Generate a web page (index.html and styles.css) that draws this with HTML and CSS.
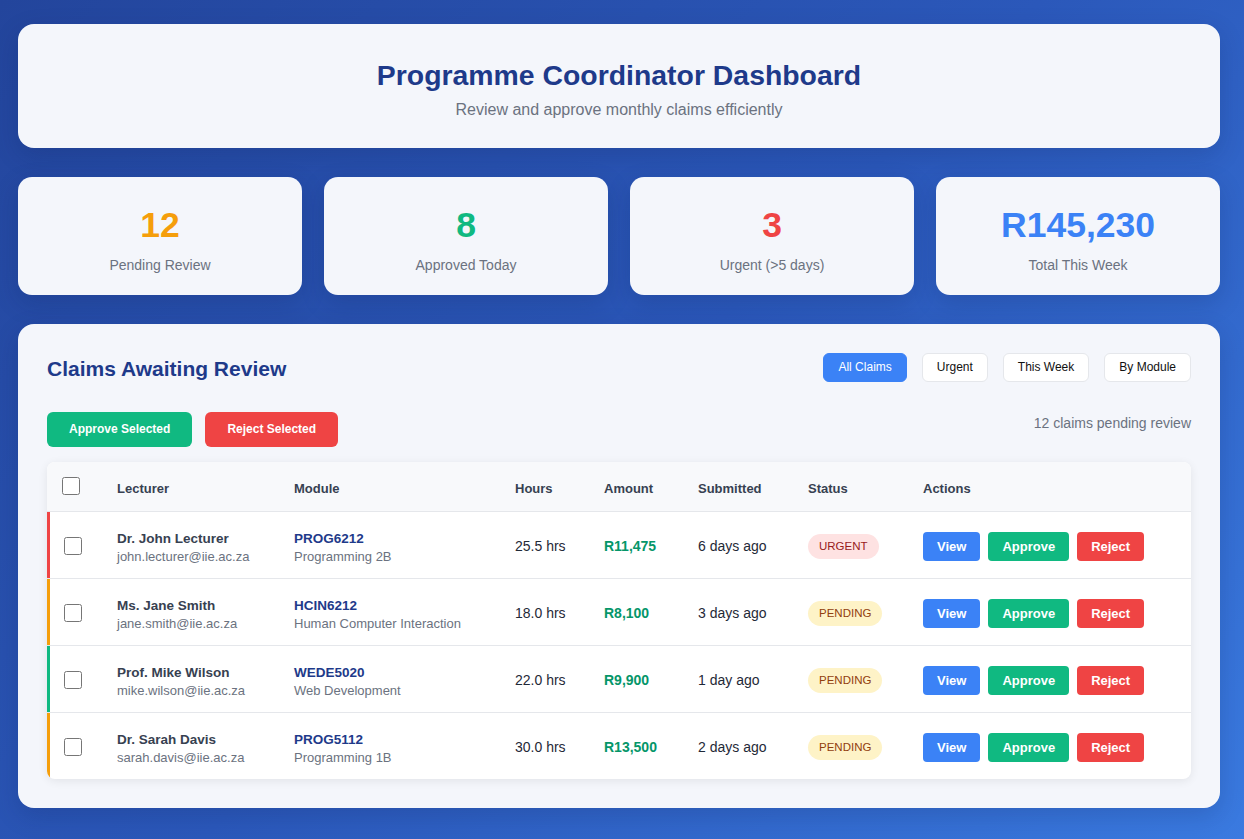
FILE: index.html
```html
<!DOCTYPE html>
<html lang="en">
<head>
<meta charset="utf-8">
<title>Programme Coordinator Dashboard</title>
<link rel="stylesheet" href="styles.css">
</head>
<body>
<div class="page">
  <header class="hero card">
    <h1 class="hero-title">Programme Coordinator Dashboard</h1>
    <p class="hero-sub">Review and approve monthly claims efficiently</p>
  </header>

  <section class="stats">
    <div class="stat card">
      <div class="stat-num amber">12</div>
      <div class="stat-label">Pending Review</div>
    </div>
    <div class="stat card">
      <div class="stat-num green">8</div>
      <div class="stat-label">Approved Today</div>
    </div>
    <div class="stat card">
      <div class="stat-num red">3</div>
      <div class="stat-label">Urgent (&gt;5 days)</div>
    </div>
    <div class="stat card">
      <div class="stat-num blue">R145,230</div>
      <div class="stat-label">Total This Week</div>
    </div>
  </section>

  <section class="panel card">
    <div class="panel-head">
      <h2 class="panel-title">Claims Awaiting Review</h2>
      <div class="filters">
        <button class="filter active">All Claims</button>
        <button class="filter">Urgent</button>
        <button class="filter">This Week</button>
        <button class="filter">By Module</button>
      </div>
    </div>

    <div class="bulk-row">
      <div class="bulk">
        <button class="bulk-btn approve">Approve Selected</button>
        <button class="bulk-btn reject">Reject Selected</button>
      </div>
      <div class="pending-count">12 claims pending review</div>
    </div>

    <div class="table-wrap">
      <table class="claims">
        <colgroup>
          <col class="c-check">
          <col class="c-lect">
          <col class="c-mod">
          <col class="c-hours">
          <col class="c-amt">
          <col class="c-sub">
          <col class="c-status">
          <col class="c-act">
        </colgroup>
        <thead>
          <tr>
            <th class="th-check"><input type="checkbox" class="cb"></th>
            <th>Lecturer</th>
            <th>Module</th>
            <th>Hours</th>
            <th>Amount</th>
            <th>Submitted</th>
            <th>Status</th>
            <th>Actions</th>
          </tr>
        </thead>
        <tbody>
          <tr class="row-urgent">
            <td><input type="checkbox" class="cb"></td>
            <td class="two-line"><div class="name">Dr. John Lecturer</div><div class="sub">john.lecturer@iie.ac.za</div></td>
            <td class="two-line"><div class="code">PROG6212</div><div class="sub">Programming 2B</div></td>
            <td>25.5 hrs</td>
            <td class="amount">R11,475</td>
            <td>6 days ago</td>
            <td><span class="badge urgent">URGENT</span></td>
            <td><div class="actions"><button class="act view">View</button><button class="act approve">Approve</button><button class="act reject">Reject</button></div></td>
          </tr>
          <tr class="row-pending">
            <td><input type="checkbox" class="cb"></td>
            <td class="two-line"><div class="name">Ms. Jane Smith</div><div class="sub">jane.smith@iie.ac.za</div></td>
            <td class="two-line"><div class="code">HCIN6212</div><div class="sub">Human Computer Interaction</div></td>
            <td>18.0 hrs</td>
            <td class="amount">R8,100</td>
            <td>3 days ago</td>
            <td><span class="badge pending">PENDING</span></td>
            <td><div class="actions"><button class="act view">View</button><button class="act approve">Approve</button><button class="act reject">Reject</button></div></td>
          </tr>
          <tr class="row-recent">
            <td><input type="checkbox" class="cb"></td>
            <td class="two-line"><div class="name">Prof. Mike Wilson</div><div class="sub">mike.wilson@iie.ac.za</div></td>
            <td class="two-line"><div class="code">WEDE5020</div><div class="sub">Web Development</div></td>
            <td>22.0 hrs</td>
            <td class="amount">R9,900</td>
            <td>1 day ago</td>
            <td><span class="badge pending">PENDING</span></td>
            <td><div class="actions"><button class="act view">View</button><button class="act approve">Approve</button><button class="act reject">Reject</button></div></td>
          </tr>
          <tr class="row-pending">
            <td><input type="checkbox" class="cb"></td>
            <td class="two-line"><div class="name">Dr. Sarah Davis</div><div class="sub">sarah.davis@iie.ac.za</div></td>
            <td class="two-line"><div class="code">PROG5112</div><div class="sub">Programming 1B</div></td>
            <td>30.0 hrs</td>
            <td class="amount">R13,500</td>
            <td>2 days ago</td>
            <td><span class="badge pending">PENDING</span></td>
            <td><div class="actions"><button class="act view">View</button><button class="act approve">Approve</button><button class="act reject">Reject</button></div></td>
          </tr>
        </tbody>
      </table>
    </div>
  </section>
</div>
</body>
</html>
```

FILE: styles.css
```css
* { box-sizing: border-box; }

html, body {
  margin: 0;
  padding: 0;
}

body {
  min-height: 100vh;
  font-family: "Liberation Sans", Arial, sans-serif;
  color: #1f2937;
  background: linear-gradient(135deg, #23459c 0%, #2b58ba 50%, #3a7ae0 100%);
}

.page {
  padding: 24px 24px 30px 18px;
}

.card {
  background: #f4f6fb;
  border-radius: 16px;
  box-shadow: 0 8px 24px rgba(10, 30, 80, 0.18);
}

/* Hero */
.hero {
  padding: 34px 30px 27px;
  text-align: center;
}

.hero-title {
  margin: 0 0 7px;
  font-size: 28.4px;
  line-height: 34px;
  font-weight: 700;
  color: #1e3a8a;
}

.hero-sub {
  margin: 0;
  font-size: 16px;
  line-height: 22px;
  color: #6b7280;
}

/* Stats */
.stats {
  margin-top: 29px;
  display: grid;
  grid-template-columns: repeat(4, 1fr);
  gap: 22px;
}

.stat {
  border-radius: 14px;
  padding: 27px 20px 20px;
  text-align: center;
}

.stat-num {
  font-size: 35.5px;
  line-height: 42px;
  font-weight: 700;
  margin-bottom: 9px;
}

.stat-label {
  font-size: 14px;
  line-height: 20px;
  color: #6b7280;
}

.amber { color: #f59e0b; }
.green { color: #10b981; }
.red { color: #ef4444; }
.blue { color: #3b82f6; }

/* Panel */
.panel {
  margin-top: 29px;
  padding: 29px;
}

.panel-head {
  display: flex;
  align-items: center;
  justify-content: space-between;
}

.panel-title {
  margin: 0;
  padding-top: 3px;
  font-size: 21px;
  line-height: 26px;
  font-weight: 700;
  color: #1e3a8a;
}

.filters {
  display: flex;
  gap: 15px;
}

.filter {
  font-family: "Liberation Sans", Arial, sans-serif;
  font-size: 12px;
  line-height: 15px;
  padding: 6px 14px;
  border: 1px solid #e5e7eb;
  border-radius: 6px;
  background: #ffffff;
  color: #111111;
}

.filter.active {
  background: #3b82f6;
  border-color: #3b82f6;
  color: #ffffff;
}

.bulk-row {
  margin-top: 30px;
  display: flex;
  align-items: flex-start;
  justify-content: space-between;
}

.bulk {
  display: flex;
  gap: 13px;
}

.bulk-btn {
  font-family: "Liberation Sans", Arial, sans-serif;
  font-size: 12px;
  line-height: 15px;
  font-weight: 700;
  padding: 10px 22px;
  border: none;
  border-radius: 6px;
  color: #ffffff;
}

.bulk-btn.approve { background: #10b981; }
.bulk-btn.reject { background: #ef4444; }

.pending-count {
  font-size: 14px;
  line-height: 22px;
  color: #6b7280;
}

/* Table */
.table-wrap {
  margin-top: 15px;
  background: #ffffff;
  border-radius: 8px;
  overflow: hidden;
  box-shadow: 0 2px 10px rgba(0, 0, 0, 0.08);
}

.claims {
  width: 100%;
  border-collapse: collapse;
  table-layout: fixed;
}

.c-check { width: 55px; }
.c-lect { width: 177px; }
.c-mod { width: 221px; }
.c-hours { width: 89px; }
.c-amt { width: 94px; }
.c-sub { width: 110px; }
.c-status { width: 115px; }
.c-act { width: 283px; }

.claims th {
  text-align: left;
  padding: 18px 15px 13px;
  font-size: 13px;
  line-height: 18px;
  font-weight: 700;
  color: #374151;
  background: #f8f9fb;
  border-bottom: 1px solid #e5e7eb;
}

.claims th.th-check {
  padding: 15px 15px 16px;
}

.claims td {
  padding: 16px 15px 14px;
  font-size: 14px;
  line-height: 18px;
  color: #1f2937;
  border-bottom: 1px solid #e5e7eb;
  vertical-align: middle;
}

.claims tbody tr:last-child td {
  border-bottom: none;
}

.claims td.two-line {
  padding-top: 18px;
  padding-bottom: 12px;
}

.claims td:first-child {
  padding-left: 17px;
}

.row-urgent td:first-child { box-shadow: inset 3px 0 0 #ef4444; }
.row-pending td:first-child { box-shadow: inset 3px 0 0 #f59e0b; }
.row-recent td:first-child { box-shadow: inset 3px 0 0 #10b981; }

.cb {
  display: block;
  width: 18px;
  height: 18px;
  margin: 0;
}

.name {
  font-size: 13.5px;
  line-height: 18px;
  font-weight: 700;
  color: #374151;
}

.code {
  font-size: 13.5px;
  line-height: 18px;
  font-weight: 700;
  color: #1e3a8a;
}

.sub {
  font-size: 13px;
  line-height: 18px;
  color: #6b7280;
}

.amount {
  font-weight: 700;
  color: #059669 !important;
}

.badge {
  display: inline-block;
  font-size: 11.5px;
  line-height: 15px;
  padding: 5px 11px;
  border-radius: 13px;
}

.badge.urgent { background: #fee2e2; color: #991b1b; }
.badge.pending { background: #fef3c7; color: #92400e; }

.actions {
  display: flex;
  gap: 8px;
}

.act {
  font-family: "Liberation Sans", Arial, sans-serif;
  font-size: 13px;
  line-height: 15px;
  font-weight: 700;
  padding: 7px 14px;
  border: none;
  border-radius: 4px;
  color: #ffffff;
}

.act.view { background: #3b82f6; }
.act.approve { background: #10b981; }
.act.reject { background: #ef4444; }
```
